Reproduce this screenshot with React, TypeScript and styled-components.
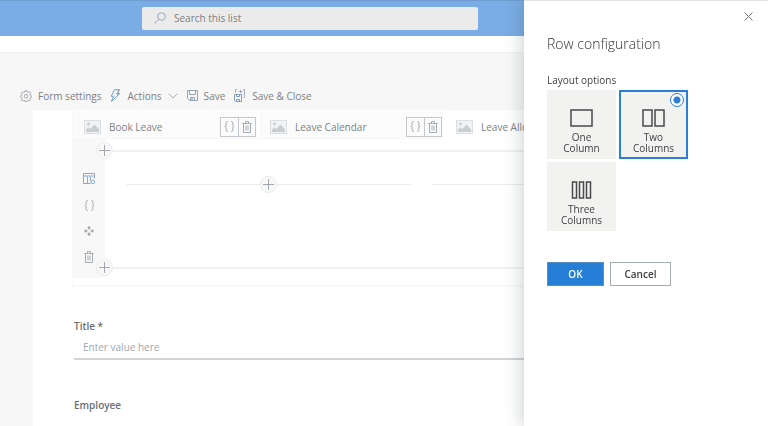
import React, { useState } from "react";
import styled, { createGlobalStyle } from "styled-components";

const GlobalStyle = createGlobalStyle`
  * { box-sizing: border-box; }
  body {
    margin: 0;
    overflow: hidden;
    background: #f7f7f7;
    font-family: "Open Sans", "Noto Sans", sans-serif;
    font-size: 10px;
    line-height: 14px;
    color: #7d8083;
  }
  button, input { font: inherit; color: inherit; }
  button { cursor: pointer; }
  h1, fieldset, legend { margin: 0; padding: 0; border: 0; }
`;

const Page = styled.div`
  display: flex;
  flex-direction: column;
  height: 100vh;
  overflow: hidden;
`;

const Header = styled.header`
  flex: none;
  display: flex;
  align-items: center;
  height: 36px;
  padding: 0 142px;
  background: #7aade5;
  border-top: 1px solid #6f9dd0;
`;

const SearchBox = styled.label`
  display: flex;
  align-items: center;
  gap: 8px;
  width: 100%;
  max-width: 336px;
  height: 23px;
  margin-bottom: 1px;
  padding: 0 12px;
  background: #ebebeb;
  border-radius: 2px;
`;

const SearchInput = styled.input`
  flex: 1;
  min-width: 0;
  padding: 0;
  border: 0;
  outline: 0;
  background: none;
  &::placeholder { color: #7d8083; opacity: 1; }
`;

const NavStrip = styled.div`
  flex: none;
  height: 16px;
  background: #fff;
`;

const CommandBar = styled.nav`
  flex: none;
  display: flex;
  align-items: center;
  gap: 9px;
  height: 58px;
  padding: 28px 20px 0;
  border-top: 1px solid #f2f2f2;
`;

const Command = styled.button`
  display: flex;
  align-items: center;
  gap: 6px;
  padding: 0;
  border: 0;
  background: none;
  white-space: nowrap;
`;

const Sheet = styled.main`
  flex: 1;
  margin-left: 33px;
  padding: 1px 30px 0 39px;
  background: #fff;
`;

const Builder = styled.section`
  border-left: 1px solid #f8f8f8;
  border-bottom: 2px solid #f8f8f8;
  padding-bottom: 7px;
  overflow: hidden;
`;

const Tabs = styled.div`
  display: flex;
  gap: 2px;
  background: #fff;
`;

const Tab = styled.div<{ $plain?: boolean }>`
  flex: 0 0 184px;
  display: flex;
  align-items: center;
  gap: 8px;
  height: 28px;
  padding: 4px 1px 0 11px;
  background: ${(p) => (p.$plain ? "#fff" : "#fbfbfb")};
  border-bottom: 1px solid ${(p) => (p.$plain ? "#fff" : "#f6f6f6")};
`;

const TabName = styled.span`
  flex: 1;
  white-space: nowrap;
`;

const TabActions = styled.div`
  display: flex;
  border: 1px solid #c3c8cc;
`;

const TabAction = styled.button`
  display: flex;
  align-items: center;
  justify-content: center;
  width: 17px;
  height: 18px;
  padding: 0;
  border: 0;
  background: none;
  & + & { border-left: 1px solid #c3c8cc; }
`;

const Row = styled.div`
  display: flex;
  height: 139px;
`;

const RowTools = styled.div`
  flex: none;
  display: flex;
  flex-direction: column;
  align-items: center;
  gap: 12px;
  width: 32px;
  padding-top: 33px;
  background: #f8f8f8;
`;

const ToolButton = styled.button`
  display: flex;
  align-items: center;
  justify-content: center;
  width: 16px;
  height: 14px;
  padding: 0;
  border: 0;
  background: none;
`;

const RowBody = styled.div`
  flex: 1;
  display: flex;
  flex-direction: column;
  padding: 3px 0 2px;
  background: #fff;
`;

const Divider = styled.div`
  display: flex;
  align-items: center;
  height: 17px;
  margin-left: -9px;
  &::after {
    content: "";
    flex: 1;
    border-top: 2px solid #f0f1f1;
  }
`;

const AddButton = styled.button`
  flex: none;
  display: flex;
  align-items: center;
  justify-content: center;
  width: 17px;
  height: 17px;
  padding: 0;
  border: 1px solid #ececec;
  border-radius: 50%;
  background: #f8f8f8;
`;

const Slots = styled.div`
  flex: 1;
  display: grid;
  grid-template-columns: 1fr 1fr;
  align-items: start;
  gap: 21px;
  padding: 17px 21px 0;
`;

const Slot = styled.div`
  display: flex;
  align-items: center;
  height: 17px;
  &::before, &::after {
    content: "";
    flex: 1;
    border-top: 1px solid #ebedee;
  }
`;

const Fields = styled.form`
  display: grid;
  gap: 38px;
  padding: 32px 0 0 2px;
`;

const Field = styled.label`
  display: block;
`;

const FieldName = styled.span`
  display: block;
  font-weight: 600;
  color: #6c6f72;
`;

const FieldInput = styled.input`
  display: block;
  width: 100%;
  height: 27px;
  padding: 3px 8px 0 9px;
  border: 0;
  border-bottom: 2px solid #d0d3d7;
  outline: 0;
  background: none;
  &::placeholder { color: #a2a8ad; opacity: 1; }
`;

const Panel = styled.aside`
  position: fixed;
  top: 0;
  right: 0;
  bottom: 0;
  width: 244px;
  padding: 0 23px;
  background: #fff;
  border-top: 1px solid #dfe3e8;
  box-shadow: 0 0 18px rgba(50, 65, 75, 0.3);
  color: #3d3f41;
`;

const PanelTop = styled.div`
  display: flex;
  justify-content: flex-end;
  margin-right: -11px;
  padding-top: 7px;
`;

const CloseButton = styled.button`
  display: flex;
  align-items: center;
  justify-content: center;
  width: 16px;
  height: 16px;
  padding: 0;
  border: 0;
  background: none;
`;

const PanelTitle = styled.h1`
  margin-top: 10px;
  font-size: 14px;
  line-height: 20px;
  font-weight: 300;
  color: #333;
`;

const Options = styled.fieldset`
  display: grid;
  grid-template-columns: 69px 69px;
  gap: 3px;
  margin-top: 19px;
`;

const OptionsLegend = styled.legend`
  margin-bottom: 3px;
`;

const Tile = styled.label<{ $selected: boolean }>`
  position: relative;
  display: flex;
  flex-direction: column;
  align-items: center;
  gap: 5px;
  height: 69px;
  padding-top: 17px;
  border: 2px solid ${(p) => (p.$selected ? "#2b7fd6" : "#f2f2f1")};
  background: #f2f2f1;
  cursor: pointer;
`;

const TileRadio = styled.input`
  position: absolute;
  top: 1px;
  right: 2px;
  width: 14px;
  height: 14px;
  margin: 0;
  appearance: none;
  border: 1px solid #2b7fd6;
  border-radius: 50%;
  background: radial-gradient(circle, #2b7fd6 3px, #fff 4px);
  opacity: 0;
  &:checked { opacity: 1; }
`;

const TileName = styled.span`
  width: 44px;
  line-height: 11px;
  text-align: center;
`;

const PanelActions = styled.div`
  display: flex;
  gap: 6px;
  margin-top: 31px;
`;

const PanelButton = styled.button<{ $primary?: boolean }>`
  min-width: ${(p) => (p.$primary ? 57 : 61)}px;
  height: 24px;
  padding: 0 8px;
  border: 1px solid ${(p) => (p.$primary ? "#5a8fc4" : "#a4acb4")};
  background: ${(p) => (p.$primary ? "#277ed6" : "#fff")};
  color: ${(p) => (p.$primary ? "#fff" : "#3d3f41")};
  font-weight: 600;
`;

const GearIcon = () => (
  <svg width="12" height="12" viewBox="0 0 24 26" fill="none" stroke="#93989d" strokeWidth="1.800">
    <path d="M10 1.500h4l.7 3 2 .9 2.700-1.700 2.800 2.800-1.700 2.700.9 2 2.100.6v4l-2.100.5-1 2 1.600 2.600-2.700 2.700-2.700-1.600-2 .9-.6 2.100h-4l-.6-2.100-2-.9-2.700 1.600L2 20.900l1.600-2.600-.9-2L.6 15.800v-4l2.100-.6.9-2L2 6.500l2.700-2.800 2.700 1.700 2-.9z" />
    <circle cx="12" cy="13.500" r="4" />
  </svg>
);

const BoltIcon = () => (
  <svg width="11" height="13" viewBox="0 0 11 13" fill="none" stroke="#6f9fce" strokeLinejoin="round">
    <path d="M4.500.7h5L7 4.800h2.500L1.500 12.300l2-5H1.200z" />
    <path d="M9.500.7 7 4.800h2.500" stroke="#8b959f" />
  </svg>
);

const ChevronIcon = () => (
  <svg width="10" height="6" viewBox="0 0 10 6" fill="none" stroke="#a8acb0">
    <path d="m.8.8 4.200 4.200L9.200.8" />
  </svg>
);

const SaveIcon = () => (
  <svg width="11" height="11" viewBox="0 0 11 11" fill="none" stroke="#98a3ae">
    <path d="M.5.500h10v10h-8l-2-2z" />
    <path d="M2.500.500v4h6v-4M3.500 10.500v-3h4v3" />
    <path d="M5 8v2" stroke="#6da3da" />
  </svg>
);

const SaveCloseIcon = () => (
  <svg width="12" height="13" viewBox="0 0 12 13" fill="none" stroke="#8d9aa7">
    <path d="M.5 5.500h7v7h-6l-1-1z" />
    <path d="M2.500 5.500v2h3v-2M2.500 12.500v-2h3v2" stroke="#6f9fce" />
    <path d="M1.500 4V.5H3M9 .5h1.500v8h-1M4.500 2.500h4M6.500.8v3.400" strokeWidth="0.800" />
  </svg>
);

const SearchIcon = () => (
  <svg width="12" height="12" viewBox="0 0 12 12" fill="none" stroke="#94a9bf">
    <circle cx="7.500" cy="4.500" r="3.800" />
    <path d="M4.700 7.300.5 11.500" />
  </svg>
);

const ImageIcon = () => (
  <svg width="17" height="14" viewBox="0 0 17 14">
    <rect x="0.500" y="0.500" width="16" height="13" fill="#f1f2f2" stroke="#dcdfe1" />
    <circle cx="4.500" cy="4" r="1.400" fill="#c9ced1" />
    <path d="M2 12V9.500l2.500-2 2 1.500L10.500 4.500l4.500 5V12z" fill="#c9ced1" />
  </svg>
);

const BracesIcon = () => (
  <svg width="11" height="11" viewBox="0 0 11 11" fill="none" stroke="#a6acb1">
    <path d="M3.800.500C2.500.500 2.200 1 2.200 2v2c0 1-.4 1.500-1.400 1.500 1 0 1.400.5 1.400 1.500v2c0 1 .3 1.500 1.600 1.500M7.200.500C8.500.500 8.800 1 8.800 2v2c0 1 .4 1.500 1.400 1.500-1 0-1.400.5-1.400 1.500v2c0 1-.3 1.500-1.600 1.500" />
  </svg>
);

const TrashIcon = () => (
  <svg width="10" height="12" viewBox="0 0 10 12" fill="none" stroke="#a3adb3">
    <path d="M.3 2.500h9.400M3.500 2.500v-2h3v2M1.500 2.500v9h7v-9" />
    <path d="M4 4.500v5M6 4.500v5" />
  </svg>
);

const LayoutIcon = () => (
  <svg width="13" height="12" viewBox="0 0 13 12" fill="none" stroke="#98a6b3">
    <path d="M7.500 10.500h-7v-10h11v5M4.500 3.500v7M7.500 3.500v4" />
    <path d="M.5 3h11" stroke="#7eaedf" />
    <circle cx="9.800" cy="9" r="1.800" stroke="#7eaedf" />
  </svg>
);

const MoveIcon = () => (
  <svg width="10" height="10" viewBox="0 0 10 10" fill="#959ca2">
    <path d="M5 0 7 2.200H5.600V3.600H4.400V2.200H3zM5 10 3 7.800h1.400V6.400h1.200v1.400H7zM0 5l2.200-2v1.400h1.400v1.200H2.200V7zM10 5 7.800 7V5.600H6.400V4.400h1.400V3z" />
  </svg>
);

const PlusIcon = () => (
  <svg width="11" height="11" viewBox="0 0 11 11" stroke="#a3a9af">
    <path d="M5.500 0v11M0 5.500h11" />
  </svg>
);

const CloseIcon = () => (
  <svg width="9" height="9" viewBox="0 0 9 9" stroke="#707274">
    <path d="m.5.500 8 8M8.500.500l-8 8" />
  </svg>
);

const ColumnsIcon = ({ columns }: { columns: number }) => {
  const width = columns === 1 ? 21 : columns === 2 ? 9 : 4;
  const pitch = columns === 3 ? 7 : 12;
  const start = columns === 3 ? 2.5 : 1;
  return (
    <svg width="23" height="18" viewBox="0 0 23 18" fill="none" stroke="#4a4a4a" strokeWidth="1.500">
      {Array.from({ length: columns }, (_, i) => (
        <rect key={i} x={start + i * pitch} y="1" width={width} height="16" />
      ))}
    </svg>
  );
};

const tabs = ["Book Leave", "Leave Calendar", "Leave Allowance"];

const layouts = [
  { columns: 1, name: "One Column" },
  { columns: 2, name: "Two Columns" },
  { columns: 3, name: "Three Columns" },
];

export default function App() {
  const [columns, setColumns] = useState(2);

  return (
    <>
      <GlobalStyle />
      <Page>
        <Header>
          <SearchBox>
            <SearchIcon />
            <SearchInput type="search" aria-label="Search this list" placeholder="Search this list" />
          </SearchBox>
        </Header>
        <NavStrip />
        <CommandBar>
          <Command><GearIcon />Form settings</Command>
          <Command><BoltIcon />Actions<ChevronIcon /></Command>
          <Command><SaveIcon />Save</Command>
          <Command><SaveCloseIcon />Save &amp; Close</Command>
        </CommandBar>
        <Sheet>
          <Builder>
            <Tabs>
              {tabs.map((name, i) => (
                <Tab key={name} $plain={i === 2}>
                  <ImageIcon />
                  <TabName>{name}</TabName>
                  <TabActions>
                    <TabAction aria-label={`Edit ${name}`}><BracesIcon /></TabAction>
                    <TabAction aria-label={`Delete ${name}`}><TrashIcon /></TabAction>
                  </TabActions>
                </Tab>
              ))}
            </Tabs>
            <Row>
              <RowTools>
                <ToolButton aria-label="Row layout"><LayoutIcon /></ToolButton>
                <ToolButton aria-label="Row expression"><BracesIcon /></ToolButton>
                <ToolButton aria-label="Move row"><MoveIcon /></ToolButton>
                <ToolButton aria-label="Delete row"><TrashIcon /></ToolButton>
              </RowTools>
              <RowBody>
                <Divider><AddButton aria-label="Add row above"><PlusIcon /></AddButton></Divider>
                <Slots>
                  <Slot><AddButton aria-label="Add to first column"><PlusIcon /></AddButton></Slot>
                  <Slot><AddButton aria-label="Add to second column"><PlusIcon /></AddButton></Slot>
                </Slots>
                <Divider><AddButton aria-label="Add row below"><PlusIcon /></AddButton></Divider>
              </RowBody>
            </Row>
          </Builder>
          <Fields>
            <Field>
              <FieldName>Title *</FieldName>
              <FieldInput placeholder="Enter value here" />
            </Field>
            <Field>
              <FieldName>Employee</FieldName>
              <FieldInput />
            </Field>
          </Fields>
        </Sheet>
      </Page>
      <Panel aria-label="Row configuration">
        <PanelTop>
          <CloseButton aria-label="Close"><CloseIcon /></CloseButton>
        </PanelTop>
        <PanelTitle>Row configuration</PanelTitle>
        <Options>
          <OptionsLegend>Layout options</OptionsLegend>
          {layouts.map((layout) => (
            <Tile key={layout.columns} $selected={columns === layout.columns}>
              <TileRadio
                type="radio"
                name="layout"
                checked={columns === layout.columns}
                onChange={() => setColumns(layout.columns)}
              />
              <ColumnsIcon columns={layout.columns} />
              <TileName>{layout.name}</TileName>
            </Tile>
          ))}
        </Options>
        <PanelActions>
          <PanelButton $primary>OK</PanelButton>
          <PanelButton>Cancel</PanelButton>
        </PanelActions>
      </Panel>
    </>
  );
}
